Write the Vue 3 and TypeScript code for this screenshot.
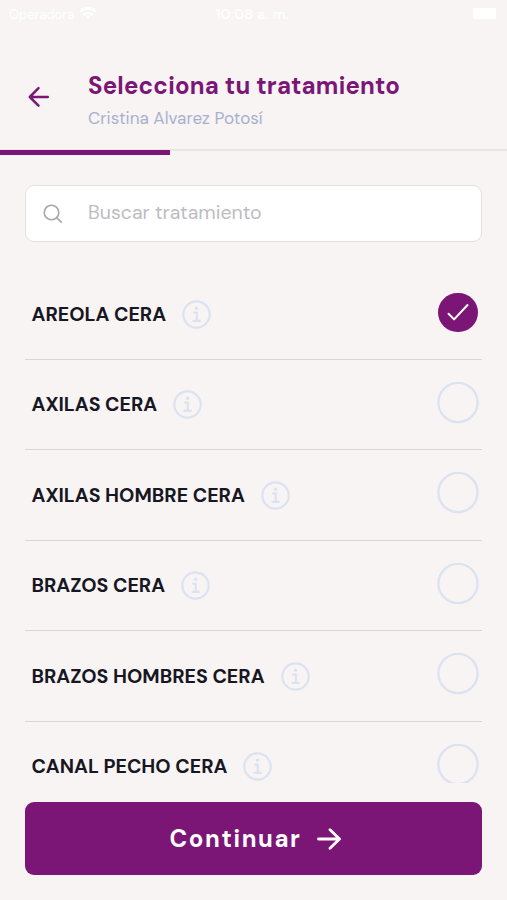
<script setup lang="ts">
import { ref } from 'vue'

interface Treatment {
  id: number
  name: string
}

const treatments: Treatment[] = [
  { id: 1, name: 'AREOLA CERA' },
  { id: 2, name: 'AXILAS CERA' },
  { id: 3, name: 'AXILAS HOMBRE CERA' },
  { id: 4, name: 'BRAZOS CERA' },
  { id: 5, name: 'BRAZOS HOMBRES CERA' },
  { id: 6, name: 'CANAL PECHO CERA' },
]

const selected = ref(1)
const query = ref('')
</script>

<template>
  <main class="screen">
    <div class="status">
      <div class="carrier">
        <span>Operadora</span>
        <svg width="18" height="13" viewBox="0 0 18 13" fill="none" stroke="#fff" stroke-width="2.5">
          <path d="M1 4.5Q9-2 17 4.5M4 8Q9 4 14 8" />
          <path d="M6.5 9.5Q9 8 11.5 9.5L9 12z" fill="#fff" stroke="none" />
        </svg>
      </div>
      <span class="clock">10:08 a. m.</span>
      <div class="battery"></div>
    </div>

    <header class="header">
      <button class="back" aria-label="Volver">
        <svg width="22" height="22" viewBox="0 0 22 22" fill="none" stroke="#7b1677" stroke-width="2.5" stroke-linecap="round" stroke-linejoin="round">
          <path d="M19.8 11H1.8M10.5 2.2L1.8 11l8.7 8.6" />
        </svg>
      </button>
      <div class="heading">
        <h1>Selecciona tu tratamiento</h1>
        <p>Cristina Alvarez Potosí</p>
      </div>
    </header>

    <div class="progress"><div class="bar"></div></div>

    <label class="search">
      <svg width="20" height="20" viewBox="0 0 20 20" fill="none" stroke="#a7a7aa" stroke-width="1.6">
        <circle cx="8.5" cy="8.5" r="7.3" />
        <path d="M13.8 13.8l5 4.8" />
      </svg>
      <input v-model="query" type="text" placeholder="Buscar tratamiento" />
    </label>

    <ul class="list">
      <li v-for="item in treatments" :key="item.id" class="row" @click="selected = item.id">
        <span class="name">{{ item.name }}</span>
        <svg class="info" width="29" height="29" viewBox="0 0 29 29" fill="none" stroke="#dce3f0">
          <circle cx="14.5" cy="14.5" r="13.2" stroke-width="2.2" />
          <path d="M11.2 12.6h3.6v8.1M10.5 20.8h8.2" stroke-width="2.2" />
          <circle cx="14.6" cy="8.2" r="1.7" fill="#dce3f0" stroke="none" />
        </svg>
        <span class="radio" :class="{ checked: selected === item.id }">
          <svg v-if="selected === item.id" width="22" height="18" viewBox="0 0 22 18" fill="none" stroke="#fff" stroke-width="2" stroke-linecap="round" stroke-linejoin="round">
            <path d="M1.5 10.8l5.6 5.6L20.5 2" />
          </svg>
          <svg v-else width="42" height="42" viewBox="0 0 42 42" fill="none" stroke="#dce3f0" stroke-width="2.3">
            <circle cx="21" cy="20.5" r="19.6" />
          </svg>
        </span>
      </li>
    </ul>

    <button class="continue">
      <span>Continuar</span>
      <svg width="24" height="22" viewBox="0 0 24 22" fill="none" stroke="#fff" stroke-width="2.8" stroke-linecap="round" stroke-linejoin="round">
        <path d="M1.5 11h21M13 1.7l9.5 9.3-9.5 9.3" />
      </svg>
    </button>
  </main>
</template>

<style>
body {
  background: #f7f4f3;
}
</style>

<style scoped>
.screen {
  box-sizing: border-box;
  height: 900px;
  overflow: hidden;
  display: flex;
  flex-direction: column;
  background: #f7f4f3;
  font-family: 'DM Sans', Inter, sans-serif;
  font-variation-settings: 'opsz' 14;
}

button {
  border: 0;
  padding: 0;
  background: none;
  font-family: inherit;
}

.status {
  flex: none;
  height: 28px;
  display: grid;
  grid-template-columns: 1fr auto 1fr;
  align-items: center;
  padding: 0 11px 0 9px;
  color: #fff;
  font-size: 14px;
}

.carrier {
  display: flex;
  align-items: center;
  gap: 5px;
  font-size: 13px;
}

.carrier svg {
  margin-top: -2px;
}

.clock {
  font-weight: 500;
  letter-spacing: 0.4px;
}

.battery {
  justify-self: end;
  width: 23px;
  height: 11px;
  margin-top: -2px;
  border-radius: 2px;
  background: #fff;
}

.header {
  flex: none;
  height: 121px;
  box-sizing: border-box;
  display: flex;
  align-items: flex-start;
  padding: 43px 0 0 28px;
}

.back {
  display: flex;
  width: 60px;
  padding-top: 15px;
}

h1 {
  margin: 0;
  font-size: 24px;
  line-height: 30px;
  font-weight: 700;
  letter-spacing: 0.2px;
  color: #7b1677;
  white-space: nowrap;
}

.heading p {
  margin: 6px 0 0;
  font-size: 17.1px;
  line-height: 22px;
  color: #a9b0ce;
}

.progress {
  flex: none;
  height: 6px;
  box-sizing: border-box;
  border-top: 2px solid #e8e5e4;
}

.bar {
  width: 170px;
  height: 5px;
  margin-top: -1px;
  background: #7b1677;
}

.search {
  flex: none;
  height: 57px;
  box-sizing: border-box;
  display: flex;
  align-items: center;
  gap: 25px;
  margin: 30px 25px 0;
  padding: 0 17px 0 17px;
  border: 1.5px solid #e3e0df;
  border-radius: 9px;
  background: #fff;
}

.search input {
  flex: 1;
  min-width: 0;
  border: 0;
  padding: 0 0 1px;
  outline: none;
  background: transparent;
  font: 400 19.5px/24px 'DM Sans', Inter, sans-serif;
  font-variation-settings: inherit;
}

.search input::placeholder {
  color: #bcbcc1;
}

.list {
  flex: none;
  height: 514px;
  margin: 27px 25px 0;
  padding: 0;
  overflow: hidden;
  list-style: none;
}

.row {
  height: 90.5px;
  box-sizing: border-box;
  display: flex;
  align-items: center;
  padding: 1px 3px 0 6.5px;
  border-bottom: 1.5px solid #d9d6d6;
}

.name {
  padding-top: 1px;
  font-size: 19.6px;
  line-height: 24px;
  font-weight: 700;
  color: #171724;
  white-space: nowrap;
}

.info {
  margin-left: 16px;
}

.radio {
  width: 42px;
  height: 42px;
  box-sizing: border-box;
  display: flex;
  align-items: center;
  justify-content: center;
  margin: 0 0 4px auto;
  border-radius: 50%;
}

.radio.checked {
  width: 39.5px;
  height: 39.5px;
  margin-right: 1.2px;
  background: #7b1677;
}

.continue {
  flex: none;
  height: 73px;
  display: flex;
  align-items: center;
  justify-content: center;
  gap: 15px;
  margin: 19px 25px 0;
  padding-left: 3px;
  border-radius: 9px;
  background: #7b1677;
  color: #fff;
  font-size: 24px;
  font-weight: 700;
  letter-spacing: 1.6px;
  font-variation-settings: inherit;
}
</style>
